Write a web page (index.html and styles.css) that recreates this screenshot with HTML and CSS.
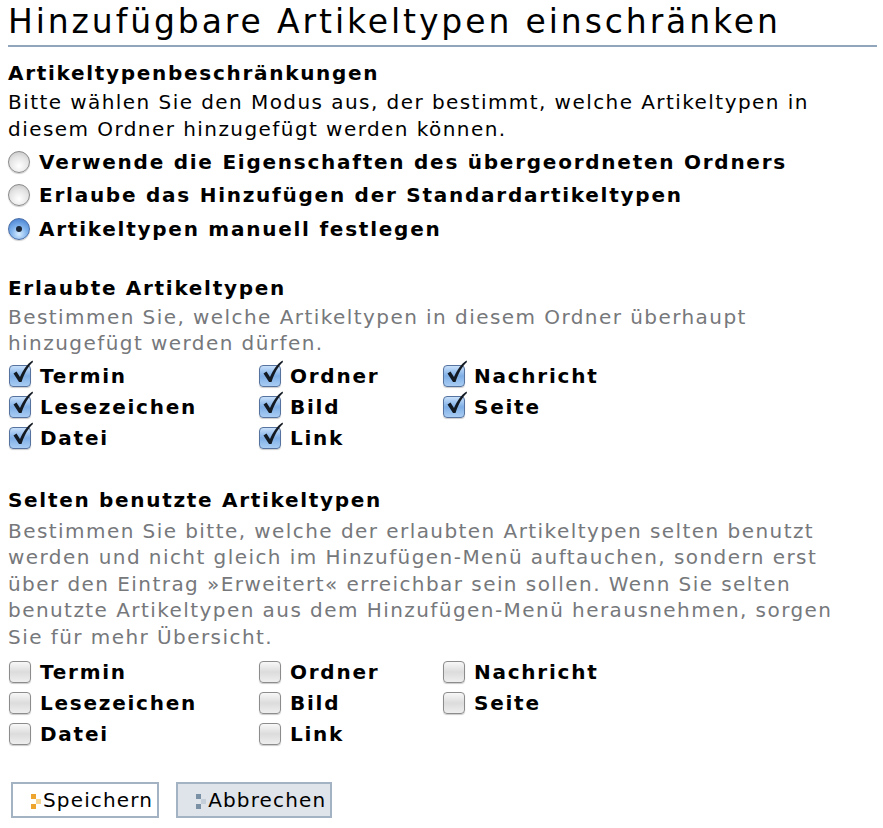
FILE: index.html
```html
<!DOCTYPE html>
<html>
    <head>
        <meta charset="utf-8">
        <link rel="stylesheet" href="styles.css">
    </head>
    <body>
        <h1 class="page-title">Hinzufügbare Artikeltypen einschränken</h1>

        <form class="restrict-form">
            <div class="field mode-field">
                <div class="field-label">Artikeltypenbeschränkungen</div>
                <div class="field-help dark">Bitte wählen Sie den Modus aus, der bestimmt, welche Artikeltypen in diesem Ordner hinzugefügt werden können.</div>
                <div class="radio-list">
                    <label class="radio-row"><span class="radio"></span>Verwende die Eigenschaften des übergeordneten Ordners</label>
                    <label class="radio-row"><span class="radio"></span>Erlaube das Hinzufügen der Standardartikeltypen</label>
                    <label class="radio-row"><span class="radio on"></span>Artikeltypen manuell festlegen</label>
                </div>
            </div>

            <div class="field allowed-field">
                <div class="field-label">Erlaubte Artikeltypen</div>
                <div class="field-help">Bestimmen Sie, welche Artikeltypen in diesem Ordner überhaupt hinzugefügt werden dürfen.</div>
                <div class="check-grid">
                    <label class="check-row"><span class="check on"></span>Termin</label>
                    <label class="check-row"><span class="check on"></span>Ordner</label>
                    <label class="check-row"><span class="check on"></span>Nachricht</label>
                    <label class="check-row"><span class="check on"></span>Lesezeichen</label>
                    <label class="check-row"><span class="check on"></span>Bild</label>
                    <label class="check-row"><span class="check on"></span>Seite</label>
                    <label class="check-row"><span class="check on"></span>Datei</label>
                    <label class="check-row"><span class="check on"></span>Link</label>
                </div>
            </div>

            <div class="field secondary-field">
                <div class="field-label">Selten benutzte Artikeltypen</div>
                <div class="field-help">Bestimmen Sie bitte, welche der erlaubten Artikeltypen selten benutzt werden und nicht gleich im Hinzufügen-Menü auftauchen, sondern erst über den Eintrag »Erweitert« erreichbar sein sollen. Wenn Sie selten benutzte Artikeltypen aus dem Hinzufügen-Menü herausnehmen, sorgen Sie für mehr Übersicht.</div>
                <div class="check-grid">
                    <label class="check-row"><span class="check"></span>Termin</label>
                    <label class="check-row"><span class="check"></span>Ordner</label>
                    <label class="check-row"><span class="check"></span>Nachricht</label>
                    <label class="check-row"><span class="check"></span>Lesezeichen</label>
                    <label class="check-row"><span class="check"></span>Bild</label>
                    <label class="check-row"><span class="check"></span>Seite</label>
                    <label class="check-row"><span class="check"></span>Datei</label>
                    <label class="check-row"><span class="check"></span>Link</label>
                </div>
            </div>

            <div class="buttons">
                <button type="button" class="btn save"><span class="btn-icon"><i></i><i></i><i></i></span>Speichern</button>
                <button type="button" class="btn cancel"><span class="btn-icon"><i></i><i></i><i></i></span>Abbrechen</button>
            </div>
        </form>
    </body>
</html>
```

FILE: styles.css
```css
body {
    margin: 0;
    padding: 0 6px 0 8px;
    font-family: 'DejaVu Sans', 'Noto Sans', sans-serif;
    color: black;
    background: white;
}

.page-title {
    margin: 0;
    font-size: 33px;
    font-weight: normal;
    letter-spacing: 2.9px;
    line-height: 44px;
    height: 45px;
    border-bottom: 2px solid #92a6bb;
    white-space: nowrap;
}

.mode-field {
    margin-top: 12px;
}
.allowed-field {
    margin-top: 28px;
}
.secondary-field {
    margin-top: 32px;
}

.field-label {
    font-size: 20px;
    font-weight: bold;
    letter-spacing: 1.7px;
    line-height: 28px;
}

.field-help {
    margin-top: 2px;
    max-width: 845px;
    font-size: 20px;
    letter-spacing: 1.44px;
    line-height: 26.5px;
    color: #76787b;
}
.field-help.dark {
    color: black;
    line-height: 27px;
}
.secondary-field .field-help {
    margin-top: 4px;
}

.radio-list {
    margin-top: 2px;
}

.radio-row,
.check-row {
    display: flex;
    align-items: center;
    gap: 9px;
    font-size: 20px;
    font-weight: bold;
    letter-spacing: 1.75px;
    white-space: nowrap;
}
.radio-row {
    height: 33.5px;
}
.check-row {
    height: 31px;
}

.check-grid {
    display: grid;
    grid-template-columns: 250px 184px auto;
    margin-top: 4px;
}
.secondary-field .check-grid {
    margin-top: 6px;
}

.radio {
    width: 22px;
    height: 22px;
    box-sizing: border-box;
    border-radius: 50%;
    border: 1px solid #8a8a8a;
    background: radial-gradient(circle at 50% 70%, #ffffff 0%, #e4e4e4 55%, #bdbdbd 100%);
    box-shadow: 0 1px 1px rgba(0,0,0,0.2);
    position: relative;
    flex: none;
}
.radio.on {
    border-color: #4b6fa8;
    background: radial-gradient(circle at 50% 75%, #d6ecff 0%, #7fb2ec 45%, #3b74c9 100%);
}
.radio.on::after {
    content: "";
    position: absolute;
    left: 7px;
    top: 7px;
    width: 6px;
    height: 6px;
    border-radius: 50%;
    background: #1c2533;
}

.check {
    width: 22px;
    height: 22px;
    box-sizing: border-box;
    border-radius: 4px;
    border: 1px solid #8c8c8c;
    background: linear-gradient(#f8f8f8, #dcdcdc 50%, #eeeeee);
    box-shadow: 0 1px 1px rgba(0,0,0,0.2);
    position: relative;
    flex: none;
    margin-left: 1px;
}
.check.on {
    border-color: #55739e;
    background: linear-gradient(#c8e0fa, #7eaee6 50%, #a9cdf3);
}
.check.on::after {
    content: "";
    position: absolute;
    left: 2px;
    top: -6px;
    width: 22px;
    height: 24px;
    background: url("data:image/svg+xml;utf8,<svg xmlns='http://www.w3.org/2000/svg' width='22' height='24' viewBox='0 0 22 24'><path d='M1.5 13.5 L4.5 11.5 L8 17 C11 10 15 4 20.5 0.5 L21 2 C16 6.5 12.5 13 9.5 22 L7 22 Z' fill='%23131a22'/></svg>") no-repeat;
}

.buttons {
    margin-top: 33px;
    display: flex;
    gap: 17px;
    padding-left: 3px;
}

.btn {
    display: flex;
    align-items: center;
    height: 36px;
    box-sizing: border-box;
    border: 2px solid #a3b3c4;
    background: white;
    font-family: 'DejaVu Sans', 'Noto Sans', sans-serif;
    font-size: 20px;
    letter-spacing: 1.15px;
    color: black;
    padding: 0 4px 0 18px;
}
.btn.cancel {
    background: #dfe4eb;
}

.btn-icon {
    display: grid;
    grid-template-columns: 5px 5px;
    grid-template-rows: 5px 5px 5px;
    margin-right: 2px;
    margin-top: 2px;
}
.btn-icon i:nth-child(1) { grid-area: 1 / 1; }
.btn-icon i:nth-child(2) { grid-area: 2 / 2; }
.btn-icon i:nth-child(3) { grid-area: 3 / 1; }
.save .btn-icon i { background: #eda530; }
.save .btn-icon i:nth-child(2) { background: #f7d694; }
.cancel .btn-icon i { background: #7a91a5; }
.cancel .btn-icon i:nth-child(2) { background: #c3ced8; }
```
